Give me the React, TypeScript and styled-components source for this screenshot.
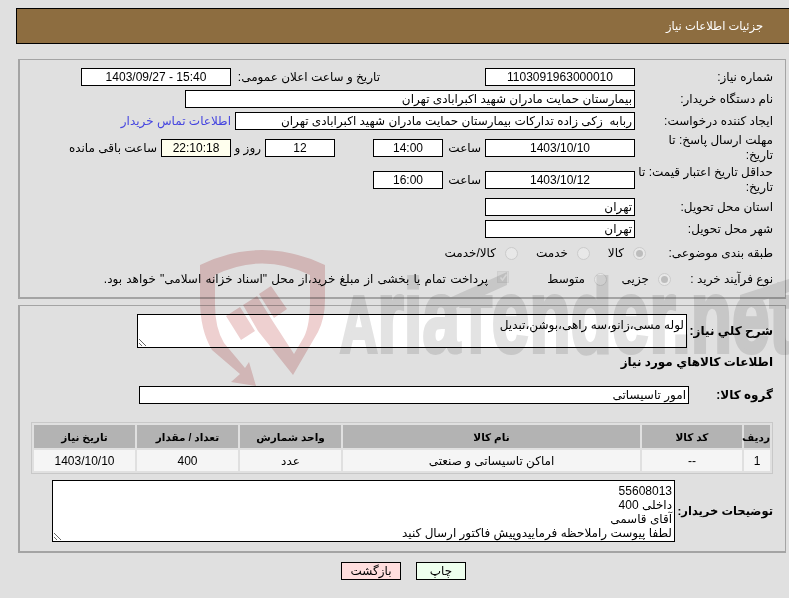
import React from 'react';
import styled, { createGlobalStyle } from 'styled-components';

const GlobalStyle = createGlobalStyle`
  html, body {
    margin: 0;
    padding: 0;
    background: #e0e0e0;
    overflow: hidden;
  }
  body {
    font-family: "Liberation Sans", "DejaVu Sans", "Noto Sans", sans-serif;
    font-size: 12px;
    color: #000;
  }
`;

const Page = styled.div`
  position: relative;
  isolation: isolate;
  width: 789px;
  height: 598px;
  overflow: hidden;
  padding: 8px 0 0 16px;
  box-sizing: border-box;
  background: #e0e0e0;
`;

// site stamp laid over the whole form, text and boxes stay readable through it
const Watermark = styled.svg`
  position: absolute;
  left: 0;
  top: 0;
  width: 789px;
  height: 598px;
  pointer-events: none;
  mix-blend-mode: multiply;
`;

const Content = styled.div`
  position: relative;
  width: 775px;
  direction: rtl;
`;

const Header = styled.div`
  height: 36px;
  box-sizing: border-box;
  border: 1px solid #000;
  background: #8d6d40;
  color: #fff;
  display: flex;
  align-items: center;
  padding-right: 27px;
  font-size: 11.5px;
`;

const Panel = styled.div<{ $top: number; $h: number }>`
  width: 768px;
  height: ${p => p.$h}px;
  box-sizing: border-box;
  margin: ${p => p.$top}px 5px 0 0;
  border: 1px solid #a4a4a4;
  border-bottom-width: 2px;
  border-left-width: 2px;
  padding-right: 12px;
`;

const InfoPanel = styled(Panel)`
  padding-top: 8px;
  display: flex;
  flex-direction: column;
  gap: 4px;
`;

const Row = styled.div<{ $h?: number }>`
  display: flex;
  align-items: center;
  height: ${p => p.$h ?? 18}px;
`;

// wide enough for the long deadline label, pulled back over the gap before its field
const Label = styled.div<{ $w?: number }>`
  width: ${p => (p.$w ?? 134) + 6}px;
  flex: none;
  margin-left: -6px;
  line-height: 15px;
  white-space: nowrap;
`;

const Box = styled.div<{ $w: number; $ltr?: boolean; $bg?: string }>`
  width: ${p => p.$w}px;
  height: 18px;
  flex: none;
  box-sizing: border-box;
  margin-right: 4px;
  border: 1px solid #000;
  background: ${p => p.$bg ?? '#fff'};
  line-height: 16px;
  padding: 0 2px;
  white-space: pre;
  overflow: hidden;
  direction: ${p => (p.$ltr ? 'ltr' : 'rtl')};
  text-align: ${p => (p.$ltr ? 'center' : 'right')};
`;

const SecondLabel = styled.div`
  width: 145px;
  flex: none;
  margin-right: 105px;
  white-space: nowrap;
`;

const Unit = styled.div<{ $w: number }>`
  width: ${p => p.$w}px;
  flex: none;
  padding-right: 4px;
  box-sizing: border-box;
  white-space: nowrap;
`;

const BuyerLink = styled.a`
  color: #4545e0;
  margin-right: 4px;
  text-decoration: none;
`;

const Radio = styled.span<{ $checked?: boolean; $after?: number }>`
  width: 13px;
  height: 13px;
  flex: none;
  box-sizing: border-box;
  border-radius: 50%;
  border: 1px solid #cbcbcb;
  background: #e8e8e8;
  display: flex;
  align-items: center;
  justify-content: center;
  margin-right: ${p => p.$after ?? 0}px;

  &::after {
    content: '';
    display: ${p => (p.$checked ? 'block' : 'none')};
    width: 7px;
    height: 7px;
    border-radius: 50%;
    background: #bdbdbd;
  }
`;

const OptionText = styled.span<{ $w: number }>`
  width: ${p => p.$w}px;
  flex: none;
  margin-right: 9px;
  white-space: nowrap;
`;

const PaymentText = styled(OptionText)`
  word-spacing: 0.85px;
`;

const CheckMark = styled.span`
  width: 12px;
  height: 12px;
  flex: none;
  box-sizing: border-box;
  border: 1px solid #cfcfcf;
  background: #d6d6d6;
  color: #efefef;
  display: flex;
  align-items: center;
  justify-content: center;
  margin: -4px 40px 0 0;
`;

const DetailPanel = styled(Panel)`
  position: relative;
  padding-top: 8px;
`;

const BoldRow = styled.div<{ $h: number; $top?: number }>`
  display: flex;
  align-items: center;
  height: ${p => p.$h}px;
  margin-top: ${p => p.$top ?? 0}px;
  font-weight: 700;
`;

const BoldLabel = styled.div<{ $w: number; $size?: number }>`
  width: ${p => p.$w}px;
  flex: none;
  font-size: ${p => p.$size ?? 12}px;
  white-space: nowrap;
`;

const Note = styled.textarea<{ $w: number; $h: number }>`
  width: ${p => p.$w}px;
  height: ${p => p.$h}px;
  flex: none;
  box-sizing: border-box;
  direction: rtl;
  border: 1px solid #000;
  border-radius: 0;
  outline: none;
  background: #fff;
  padding: 3px 2px 0;
  margin: 0;
  font: 400 12px/14px "Liberation Sans", "DejaVu Sans", sans-serif;
  color: #000;
  overflow: hidden;
`;

const GroupBox = styled.div`
  width: 550px;
  height: 18px;
  flex: none;
  box-sizing: border-box;
  border: 1px solid #000;
  background: #fff;
  font-weight: 400;
  line-height: 16px;
  padding: 0 2px;
`;

const ItemsTable = styled.table`
  width: 741px;
  margin-top: 18px;
  table-layout: fixed;
  border: 1px solid #c8c8c8;
  border-collapse: separate;
  border-spacing: 2px;
`;

const HeadCell = styled.th<{ $w: number }>`
  width: ${p => p.$w}px;
  height: 23px;
  padding: 0;
  background: #b3b3b3;
  font-size: 10.5px;
  font-weight: 700;
  text-align: center;
`;

const BodyCell = styled.td`
  height: 21px;
  padding: 0;
  background: #f5f5f5;
  text-align: center;
`;

const Buttons = styled.div`
  display: flex;
  justify-content: center;
  gap: 15px;
  margin-top: 9px;
`;

const PageButton = styled.button<{ $bg: string; $w: number }>`
  width: ${p => p.$w}px;
  height: 18px;
  box-sizing: border-box;
  padding: 0;
  border: 1px solid #000;
  background: ${p => p.$bg};
  font: 400 12px "Liberation Sans", "DejaVu Sans", sans-serif;
  color: #000;
`;

const items = [
  { title: 'ردیف', w: 26, value: '1' },
  { title: 'کد کالا', w: 100, value: '--' },
  { title: 'نام کالا', w: 297, value: 'اماکن تاسیساتی و صنعتی' },
  { title: 'واحد شمارش', w: 101, value: 'عدد' },
  { title: 'تعداد / مقدار', w: 101, value: '400' },
  { title: 'تاریخ نیاز', w: 101, value: '1403/10/10' },
];

const buyerNote = `55608013
داخلی 400
آقای قاسمی
لطفا پیوست راملاحظه فرماییدوپیش فاکتور ارسال کنید`;

const App: React.FC = () => {
  return (
    <Page>
      <GlobalStyle />
      <Content>
        <Header>جزئیات اطلاعات نیاز</Header>
        <InfoPanel $top={15} $h={240}>
          <Row>
            <Label>شماره نیاز:</Label>
            <Box $w={150} $ltr>1103091963000010</Box>
            <SecondLabel>تاریخ و ساعت اعلان عمومی:</SecondLabel>
            <Box $w={150} $ltr>1403/09/27 - 15:40</Box>
          </Row>
          <Row>
            <Label>نام دستگاه خریدار:</Label>
            <Box $w={450}>بیمارستان حمایت مادران شهید اکبرابادی تهران</Box>
          </Row>
          <Row>
            <Label>ایجاد کننده درخواست:</Label>
            <Box $w={400}>ربابه  زکی زاده تدارکات بیمارستان حمایت مادران شهید اکبرابادی تهران</Box>
            <BuyerLink href="#">اطلاعات تماس خریدار</BuyerLink>
          </Row>
          <Row $h={28}>
            <Label>مهلت ارسال پاسخ: تا<br />تاریخ:</Label>
            <Box $w={150} $ltr>1403/10/10</Box>
            <Unit $w={38}>ساعت</Unit>
            <Box $w={70} $ltr>14:00</Box>
            <Unit $w={34}> </Unit>
            <Box $w={70} $ltr>12</Box>
            <Unit $w={30}>روز و</Unit>
            <Box $w={70} $ltr $bg="#ffffee">22:10:18</Box>
            <Unit $w={100}>ساعت باقی مانده</Unit>
          </Row>
          <Row $h={28}>
            <Label>حداقل تاریخ اعتبار قیمت: تا<br />تاریخ:</Label>
            <Box $w={150} $ltr>1403/10/12</Box>
            <Unit $w={38}>ساعت</Unit>
            <Box $w={70} $ltr>16:00</Box>
          </Row>
          <Row>
            <Label>استان محل تحویل:</Label>
            <Box $w={150}>تهران</Box>
          </Row>
          <Row>
            <Label>شهر محل تحویل:</Label>
            <Box $w={150}>تهران</Box>
          </Row>
          <Row $h={22}>
            <Label $w={127}>طبقه بندی موضوعی:</Label>
            <Radio $checked />
            <OptionText $w={16}>کالا</OptionText>
            <Radio $after={18} />
            <OptionText $w={32}>خدمت</OptionText>
            <Radio $after={18} />
            <OptionText $w={54}>کالا/خدمت</OptionText>
          </Row>
          <Row $h={22}>
            <Label $w={102}>نوع فرآیند خرید :</Label>
            <Radio $checked />
            <OptionText $w={27}>جزیی</OptionText>
            <Radio $after={15} />
            <OptionText $w={36}>متوسط</OptionText>
            <CheckMark>
              <svg width="9" height="9" viewBox="0 0 9 9">
                <path d="M1.5 4.5L3.5 7L7.5 1.5" fill="none" stroke="currentColor" strokeWidth="1.6" />
              </svg>
            </CheckMark>
            <PaymentText $w={384}>پرداخت تمام یا بخشی از مبلغ خرید،از محل "اسناد خزانه اسلامی" خواهد بود.</PaymentText>
          </Row>
        </InfoPanel>
        <DetailPanel $top={6} $h={248}>
          <BoldRow $h={34}>
            <BoldLabel $w={86}>شرح کلي نیاز:</BoldLabel>
            <Note $w={550} $h={34} readOnly value="لوله مسی،زانو،سه راهی،بوشن،تبدیل" />
          </BoldRow>
          <BoldRow $h={16} $top={6}>
            <BoldLabel $w={300}>اطلاعات کالاهاي مورد نیاز</BoldLabel>
          </BoldRow>
          <BoldRow $h={18} $top={16}>
            <BoldLabel $w={84}>گروه کالا:</BoldLabel>
            <GroupBox>امور تاسیساتی</GroupBox>
          </BoldRow>
          <ItemsTable>
            <thead>
              <tr>
                {items.map(item => (
                  <HeadCell key={item.title} $w={item.w}>{item.title}</HeadCell>
                ))}
              </tr>
            </thead>
            <tbody>
              <tr>
                {items.map(item => (
                  <BodyCell key={item.title}>{item.value}</BodyCell>
                ))}
              </tr>
            </tbody>
          </ItemsTable>
          <BoldRow $h={62} $top={6}>
            <BoldLabel $w={98} $size={11.5}>توضیحات خریدار:</BoldLabel>
            <Note $w={623} $h={62} readOnly value={buyerNote} />
          </BoldRow>
        </DetailPanel>
        <Buttons>
          <PageButton $bg="#eeffee" $w={50}>چاپ</PageButton>
          <PageButton $bg="#ffdede" $w={60}>بازگشت</PageButton>
        </Buttons>
      </Content>
      <Watermark viewBox="0 0 789 598">
        {/* shield outline with the gavel handle and the arrow at its lower end */}
        <path
          fill="#eed0d0"
          d="M200 265Q262 235 325 265L325 300Q325 318 318 332L293 375L258 331L243 305L257 296L272 320L294 354L304 337Q310 325 310 300L310 275Q262 252 215 275L215 305Q215 328 224 343L245 368L249 362L256 386L231 382L240 374L233 368L212 350Q200 330 200 300Z"
        />
        <path fill="#eed0d0" d="M226 316L240 307L255 331L241 340Z" />
        <path fill="#eed0d0" d="M259 294L271 286L287 309L274 318Z" />
        <text
          x="340"
          y="352"
          textLength="452"
          lengthAdjust="spacingAndGlyphs"
          fontFamily="Liberation Sans"
          fontWeight="700"
          fontSize="104"
          fill="#e3e3e3"
          stroke="#e3e3e3"
          strokeWidth="4"
        >
          <tspan fontSize="80">A</tspan>ria<tspan fontSize="80">T</tspan>ender.net
        </text>
        <path fill="#e3e3e3" d="M447 299L507 272L507 285L447 312Z" />
        <path fill="#e3e3e3" d="M740 295L789 279L789 292L740 308Z" />
      </Watermark>
    </Page>
  );
};

export default App;
